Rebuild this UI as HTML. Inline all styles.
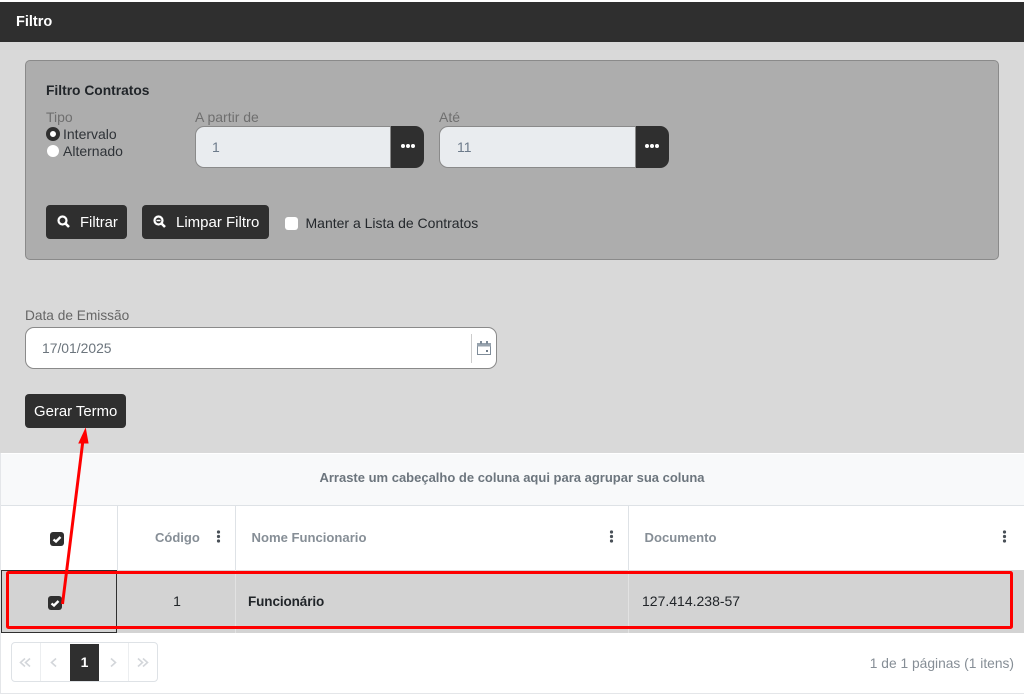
<!DOCTYPE html>
<html lang="pt"><head><meta charset="utf-8"><title>Filtro</title>
<style>
html,body{margin:0;padding:0;width:1024px;height:694px;overflow:hidden;background:#d9d9d9}
body{position:relative;font-family:"Liberation Sans",Arial,sans-serif;font-size:14px}
.a{position:absolute;white-space:nowrap;box-sizing:border-box}
.t{line-height:18px;height:18px}
.btn{background:#2f2f2f;border-radius:4px;color:#fff}
.inp{background:#e9ecef;border:1px solid #8a8a8a;border-radius:9px 0 0 9px}
.dots{background:#2f2f2f;border-radius:0 9px 9px 0}
svg{position:absolute;overflow:visible}
</style></head><body>
<div class="a" style="left:0;top:0;width:1024px;height:2px;background:#fff"></div>
<div class="a" style="left:0;top:2px;width:1024px;height:40px;background:#2f2f2f"></div>
<div class="a t" style="left:16px;top:13px;color:#fff;font-weight:bold;font-size:14.5px">Filtro</div>

<div class="a" style="left:25px;top:60px;width:974px;height:200px;background:#adadad;border:1px solid #8a8a8a;border-radius:5px"></div>
<div class="a t" style="left:46px;top:82px;font-weight:bold;color:#212529;font-size:13.8px">Filtro Contratos</div>
<div class="a t" style="left:46px;top:108px;color:#6f6f6f;font-size:14px">Tipo</div>
<div class="a" style="left:46px;top:127px;width:14px;height:14px;border-radius:50%;background:#fff;border:4px solid #2f2f2f"></div>
<div class="a t" style="left:63px;top:125px;color:#2f3338;font-size:14px">Intervalo</div>
<div class="a" style="left:47px;top:145px;width:12px;height:12px;border-radius:50%;background:#fff"></div>
<div class="a t" style="left:63px;top:142px;color:#2f3338;font-size:14px">Alternado</div>

<div class="a t" style="left:195px;top:108px;color:#6f6f6f;font-size:14px">A partir de</div>
<div class="a inp" style="left:195px;top:126px;width:196px;height:42px"></div>
<div class="a t" style="left:212px;top:138px;color:#6c7a8a;font-size:14px">1</div>
<div class="a dots" style="left:391px;top:126px;width:33px;height:42px"></div>
<svg style="left:401px;top:143px" width="14" height="6" fill="#fff"><circle cx="2" cy="3" r="2"/><circle cx="7" cy="3" r="2"/><circle cx="12" cy="3" r="2"/></svg>

<div class="a t" style="left:439px;top:108px;color:#6f6f6f;font-size:14px">Até</div>
<div class="a inp" style="left:439px;top:126px;width:197px;height:42px"></div>
<div class="a t" style="left:457px;top:138px;color:#6c7a8a;font-size:14px">11</div>
<div class="a dots" style="left:636px;top:126px;width:33px;height:42px"></div>
<svg style="left:645px;top:143px" width="14" height="6" fill="#fff"><circle cx="2" cy="3" r="2"/><circle cx="7" cy="3" r="2"/><circle cx="12" cy="3" r="2"/></svg>

<div class="a btn" style="left:46px;top:205px;width:81px;height:34px"></div>
<svg style="left:57px;top:215px" width="13" height="13" fill="none" stroke="#fff"><circle cx="5.500" cy="5.500" r="4" stroke-width="2.200"/><path d="M8.500 8.500L12 12" stroke-width="2.600"/></svg>
<div class="a t" style="left:80px;top:214px;color:#fff;font-size:14.800px">Filtrar</div>
<div class="a btn" style="left:142px;top:205px;width:127px;height:34px"></div>
<svg style="left:153px;top:215px" width="13" height="13" fill="none" stroke="#fff"><circle cx="5.500" cy="5.500" r="4" stroke-width="2.200"/><path d="M8.500 8.500L12 12" stroke-width="2.600"/><path d="M3.500 5.500H7.500" stroke-width="1.500"/></svg>
<div class="a t" style="left:176px;top:214px;color:#fff;font-size:15px">Limpar Filtro</div>
<div class="a" style="left:285px;top:217px;width:13px;height:13px;background:#fff;border-radius:3px"></div>
<div class="a t" style="left:305.500px;top:214px;color:#24282c;font-size:14px">Manter a Lista de Contratos</div>

<div class="a t" style="left:25px;top:307px;color:#666;font-size:13.700px">Data de Emissão</div>
<div class="a" style="left:25px;top:327px;width:472px;height:42px;background:#fff;border:1px solid #8a8a8a;border-radius:9px"></div>
<div class="a t" style="left:42px;top:339px;color:#6c757d;font-size:13.900px">17/01/2025</div>
<div class="a" style="left:471px;top:334px;width:1px;height:29px;background:#ccc"></div>
<svg style="left:477px;top:341px" width="14" height="14"><rect x=".5" y="2.500" width="13" height="11" fill="#fff" stroke="#7f8c99"/><rect x="0" y="2" width="14" height="3.500" fill="#98a3ae"/><rect x="3" y="0" width="2" height="3" fill="#7f8c99"/><rect x="9" y="0" width="2" height="3" fill="#7f8c99"/><rect x="9" y="9" width="2" height="2" fill="#6f7c89"/></svg>

<div class="a btn" style="left:25px;top:394px;width:101px;height:34px"></div>
<div class="a t" style="left:34px;top:403px;color:#fff;font-size:14.900px">Gerar Termo</div>

<div class="a" style="left:0;top:453px;width:1024px;height:241px;background:#fff"></div>
<div class="a" style="left:1px;top:454px;width:1023px;height:51px;background:#f8f9fa"></div>
<div class="a" style="left:0;top:505px;width:1024px;height:1px;background:#dee2e6"></div>
<div class="a" style="left:0;top:453px;width:1px;height:241px;background:#e4e6e9"></div>
<div class="a t" style="left:0;top:469px;width:1024px;text-align:center;color:#6c757d;font-weight:bold;font-size:13px">Arraste um cabeçalho de coluna aqui para agrupar sua coluna</div>

<div class="a" style="left:117px;top:506px;width:1px;height:64px;background:#dee2e6"></div>
<div class="a" style="left:235px;top:506px;width:1px;height:64px;background:#dee2e6"></div>
<div class="a" style="left:628px;top:506px;width:1px;height:64px;background:#dee2e6"></div>

<div class="a" style="left:50px;top:532px;width:14px;height:14px;background:#2f2f2f;border-radius:3px"></div>
<svg style="left:50px;top:532px" width="14" height="14" fill="none" stroke="#fff" stroke-width="2.400"><path d="M3.500 7.500L6 9.500L10.500 5"/></svg>
<div class="a t" style="left:155px;top:529px;color:#868e96;font-weight:bold;font-size:13px">Código</div>
<svg style="left:216px;top:530px" width="5" height="13" fill="#495057"><circle cx="2.500" cy="2" r="1.600"/><circle cx="2.500" cy="6.500" r="1.600"/><circle cx="2.500" cy="11" r="1.600"/></svg>
<div class="a t" style="left:251.500px;top:529px;color:#868e96;font-weight:bold;font-size:13.100px">Nome Funcionario</div>
<svg style="left:609px;top:530px" width="5" height="13" fill="#495057"><circle cx="2.500" cy="2" r="1.600"/><circle cx="2.500" cy="6.500" r="1.600"/><circle cx="2.500" cy="11" r="1.600"/></svg>
<div class="a t" style="left:644.500px;top:529px;color:#868e96;font-weight:bold;font-size:13.100px">Documento</div>
<svg style="left:1002px;top:530px" width="5" height="13" fill="#495057"><circle cx="2.500" cy="2" r="1.600"/><circle cx="2.500" cy="6.500" r="1.600"/><circle cx="2.500" cy="11" r="1.600"/></svg>

<div class="a" style="left:1px;top:570px;width:1023px;height:63px;background:#d3d3d3"></div>
<div class="a" style="left:235px;top:570px;width:1px;height:63px;background:#e2e2e2"></div>
<div class="a" style="left:628px;top:570px;width:1px;height:63px;background:#e2e2e2"></div>
<div class="a" style="left:1px;top:570px;width:116px;height:63px;border:1px solid #2f2f2f"></div>
<div class="a" style="left:48px;top:596px;width:14px;height:14px;background:#2f2f2f;border-radius:3px"></div>
<svg style="left:48px;top:596px" width="14" height="14" fill="none" stroke="#fff" stroke-width="2.400"><path d="M3.500 7.500L6 9.500L10.500 5"/></svg>
<div class="a t" style="left:118px;top:592px;width:118px;text-align:center;color:#212529;font-size:14px">1</div>
<div class="a t" style="left:248px;top:593px;color:#212529;font-size:13.500px;font-weight:bold;letter-spacing:-.1px">Funcionário</div>
<div class="a t" style="left:642px;top:592px;color:#212529;font-size:14px">127.414.238-57</div>

<div class="a" style="left:11px;top:642px;width:147px;height:40px;border:1px solid #dee2e6;border-radius:4px;background:#fff"></div>
<div class="a" style="left:40px;top:643px;width:1px;height:38px;background:#eceef0"></div>
<div class="a" style="left:128px;top:643px;width:1px;height:38px;background:#eceef0"></div>
<div class="a" style="left:70px;top:644px;width:29px;height:37px;background:#2f2f2f"></div>
<div class="a t" style="left:70px;top:653px;width:29px;text-align:center;color:#fff;font-weight:bold;font-size:14px">1</div>
<svg style="left:19px;top:656.500px" width="130" height="11" fill="none" stroke="#d3d6da" stroke-width="1.600"><path d="M6 1.500L1.500 5.500L6 9.500M11 1.500L6.500 5.500L11 9.500"/><path d="M37 1.500L32.500 5.500L37 9.500"/><path d="M92 1.500L96.500 5.500L92 9.500"/><path d="M119 1.500L123.500 5.500L119 9.500M124 1.500L128.500 5.500L124 9.500"/></svg>
<div class="a t" style="right:10px;top:655px;color:#868e96;font-size:13.800px">1 de 1 páginas (1 itens)</div>
<div class="a" style="left:0;top:693px;width:1024px;height:1px;background:#e4e6e9"></div>

<svg style="left:0;top:0" width="1024" height="694" fill="none">
<rect x="7.500" y="572.500" width="1004" height="55" rx="1" stroke="#f00" stroke-width="3"/>
<path d="M62.500 604L83 440" stroke="#f00" stroke-width="3"/>
<path d="M85.500 429L79 443L88 443Z" fill="#f00" stroke="#f00" stroke-width="1"/>
</svg>
</body></html>
